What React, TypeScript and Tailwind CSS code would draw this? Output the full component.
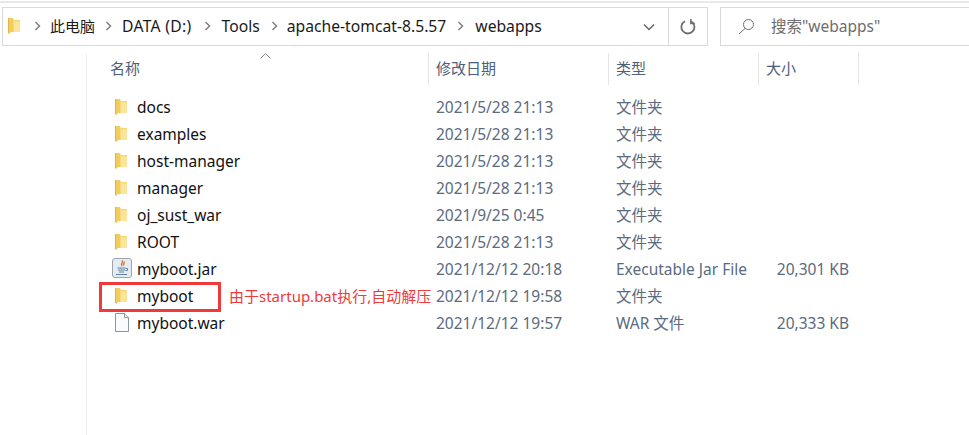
const FONT = '"Noto Sans", "Noto Sans CJK SC", sans-serif'

type Row = {
  name: string
  date: string
  type: string
  size?: string
  icon: 'folder' | 'jar' | 'file'
}

const rows: Row[] = [
  { name: 'docs', date: '2021/5/28 21:13', type: '文件夹', icon: 'folder' },
  { name: 'examples', date: '2021/5/28 21:13', type: '文件夹', icon: 'folder' },
  { name: 'host-manager', date: '2021/5/28 21:13', type: '文件夹', icon: 'folder' },
  { name: 'manager', date: '2021/5/28 21:13', type: '文件夹', icon: 'folder' },
  { name: 'oj_sust_war', date: '2021/9/25 0:45', type: '文件夹', icon: 'folder' },
  { name: 'ROOT', date: '2021/5/28 21:13', type: '文件夹', icon: 'folder' },
  { name: 'myboot.jar', date: '2021/12/12 20:18', type: 'Executable Jar File', size: '20,301 KB', icon: 'jar' },
  { name: 'myboot', date: '2021/12/12 19:58', type: '文件夹', icon: 'folder' },
  { name: 'myboot.war', date: '2021/12/12 19:57', type: 'WAR 文件', size: '20,333 KB', icon: 'file' },
]

function FolderIcon() {
  return (
    <svg width="14" height="18" viewBox="0 0 14 18">
      <path d="M1 1h5l1.500 2H13v12H3.500L3 17l-2-1z" fill="#fbe49c" />
      <path d="M1 1h4.500l1 2v12H3.500L3 17l-2-1z" fill="#f3cd5c" />
      <path d="M1 1h1v15H1z" fill="#e3b440" />
      <path d="M6.500 3H13v1.500H6.500z" fill="#f7d873" />
    </svg>
  )
}

function JarIcon() {
  return (
    <svg width="20" height="20" viewBox="0 0 20 20">
      <rect x="0.500" y="0.500" width="19" height="19" rx="2.500" fill="#e6ebf0" stroke="#9aa5b1" />
      <path d="M10 2.500c2 2-2 3 0 5.500M12 3.500c1 1.500-1.500 2.500 0 4" fill="none" stroke="#d9702a" strokeWidth="1.300" />
      <path d="M5.500 10h8M6 12h7M7 14h5" fill="none" stroke="#5f84a8" strokeWidth="1.200" />
      <path d="M13.500 10.500h2v2h-2M4 16.500h11" fill="none" stroke="#5f84a8" strokeWidth="1" />
    </svg>
  )
}

function FileIcon() {
  return (
    <svg width="16" height="19" viewBox="0 0 16 19">
      <path d="M1.500 0.500h9l4 4v14h-13z" fill="#fafbfc" stroke="#8d959d" />
      <path d="M10.500 0.500v4h4" fill="#eef0f2" stroke="#8d959d" />
    </svg>
  )
}

function Chevron() {
  return (
    <svg width="7" height="10" viewBox="0 0 7 10" className="shrink-0">
      <path d="M1.500 1l4 4-4 4" fill="none" stroke="#7f7f7f" strokeWidth="1.500" />
    </svg>
  )
}

function HeaderCell({ label, width }: { label: string; width: string }) {
  return (
    <div className={`${width} h-8 flex items-center pl-[7px] pb-px border-r border-[#e5e5e5] text-[#4c607a]`}>
      {label}
    </div>
  )
}

export default function App() {
  return (
    <div
      className="w-[969px] h-[435px] overflow-hidden bg-white text-[15.5px]"
      style={{ fontFamily: FONT }}
    >
      <div className="h-[7px] pt-px">
        <div className="h-0.5 bg-[#e9e9e9]" />
      </div>

      {/* Address bar */}
      <div className="flex pl-0.5 h-[39px]">
        <div className="w-[666px] flex items-center border border-r-0 border-[#d9d9d9] text-[#1a1a1a] text-[15.7px]">
          <div className="ml-1 mt-[-2px]">
            <FolderIcon />
          </div>
          <div className="ml-[13px] flex items-center">
            <Chevron />
            <span className="ml-[9px] text-[15px]">此电脑</span>
            <span className="ml-[10px]"><Chevron /></span>
            <span className="ml-[10px] tracking-[0.3px]">DATA (D:)</span>
            <span className="ml-3"><Chevron /></span>
            <span className="ml-[11px]">Tools</span>
            <span className="ml-[11px]"><Chevron /></span>
            <span className="ml-[9px]">apache-tomcat-8.5.57</span>
            <span className="ml-[11px]"><Chevron /></span>
            <span className="ml-[11px]">webapps</span>
          </div>
          <svg width="12" height="8" viewBox="0 0 12 8" className="ml-auto mr-[13px]">
            <path d="M1 1.500l5 5 5-5" fill="none" stroke="#666" strokeWidth="1.500" />
          </svg>
        </div>
        <div className="w-[40px] flex items-center justify-center border border-[#d9d9d9]">
          <svg width="16" height="16" viewBox="0 0 16 16">
            <path d="M11 2.300A6.500 6.500 0 1 1 5 2.200" fill="none" stroke="#707070" strokeWidth="1.800" />
            <path d="M10.800 0v4.500h4" fill="none" stroke="#707070" strokeWidth="1.500" />
          </svg>
        </div>
        <div className="ml-3 flex-1 flex items-center border border-r-0 border-[#d9d9d9] text-[#6d6d6d]">
          <svg width="17" height="17" viewBox="0 0 17 17" className="ml-[17px]">
            <circle cx="10.500" cy="6.500" r="5" fill="none" stroke="#707070" />
            <path d="M7 10.500l-6 5.500" fill="none" stroke="#707070" />
          </svg>
          <span className="ml-4">搜索"webapps"</span>
        </div>
      </div>

      <div className="flex h-[389px]">
        {/* Navigation pane (empty) */}
        <div className="w-[87px] mt-[7px] border-r border-[#efefef]" />

        <div className="flex-1 pt-[7px]">
          {/* Column headers */}
          <div className="relative flex text-[15px]">
            <div className="absolute left-[173px] top-0">
              <svg width="11" height="6" viewBox="0 0 11 6">
                <path d="M0.500 5.500l5-5 5 5" fill="none" stroke="#8a8a8a" />
              </svg>
            </div>
            <div className="w-[342px] h-8 flex items-center pl-[23px] pb-px border-r border-[#e5e5e5] text-[#4c607a]">
              名称
            </div>
            <HeaderCell label="修改日期" width="w-[180px]" />
            <HeaderCell label="类型" width="w-[150px]" />
            <HeaderCell label="大小" width="w-[100px]" />
          </div>

          {/* Files */}
          <div className="mt-[9px]">
            {rows.map((row, i) => (
              <div key={row.name} className="relative flex items-center h-[27px]">
                <div className="w-[342px] flex items-center shrink-0">
                  <div className="w-[50px] flex pl-[25px]">
                    {row.icon === 'folder' && (
                      <div className="ml-0.5 -mt-0.5">
                        <FolderIcon />
                      </div>
                    )}
                    {row.icon === 'jar' && (
                      <div className="-mt-[3px]">
                        <JarIcon />
                      </div>
                    )}
                    {row.icon === 'file' && (
                      <div className="ml-0.5 -mt-0.5">
                        <FileIcon />
                      </div>
                    )}
                  </div>
                  <span className="text-[#111]">{row.name}</span>
                </div>
                <div className="w-[180px] pl-[7px] text-[#5a6b80] shrink-0">{row.date}</div>
                <div className="w-[150px] pl-[7px] text-[#5a6b80] shrink-0">{row.type}</div>
                <div className="w-[90px] text-right text-[#5a6b80] shrink-0">{row.size}</div>
                {i === 7 && (
                  <>
                    <div className="absolute left-3 top-[-1px] w-[122px] h-[30px] border-[3px] border-[#f03a3a]" />
                    <span className="absolute left-[142px] top-[2px] text-[15px] leading-[22px] text-[#f03a3a]">
                      由于startup.bat执行,自动解压
                    </span>
                  </>
                )}
              </div>
            ))}
          </div>
        </div>
      </div>
    </div>
  )
}
